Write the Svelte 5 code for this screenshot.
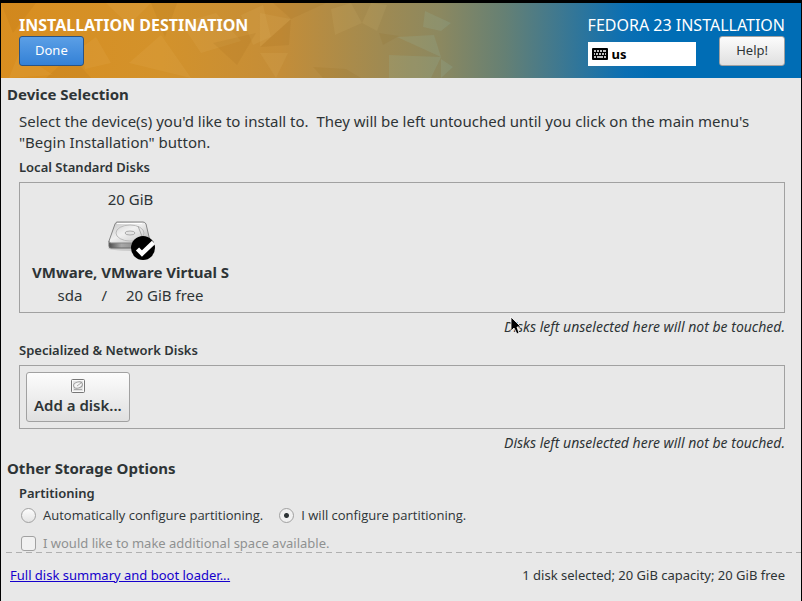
<script>
  let keyboard = 'us';
  let partitioning = 'custom';
  let reclaim = false;
  let selected = true;

  const disk = {
    size: '20 GiB',
    name: 'VMware, VMware Virtual S',
    device: 'sda',
    free: '20 GiB free'
  };

  const untouched = 'Disks left unselected here will not be touched.';

  function toggleDisk() {
    selected = !selected;
  }
</script>

<svelte:head>
  <title>Installation Destination</title>
</svelte:head>

<div class="window">
  <header>
    <svg class="backdrop" viewBox="0 0 800 75" preserveAspectRatio="none" aria-hidden="true">
      <defs>
        <linearGradient id="sky">
          <stop offset="0" stop-color="#d98e20" />
          <stop offset="0.2" stop-color="#d3922b" />
          <stop offset="0.35" stop-color="#c48d38" />
          <stop offset="0.44" stop-color="#a98b4b" />
          <stop offset="0.55" stop-color="#8b8860" />
          <stop offset="0.63" stop-color="#658074" />
          <stop offset="0.7" stop-color="#3d7891" />
          <stop offset="0.78" stop-color="#0b6fb3" />
          <stop offset="0.82" stop-color="#006db5" />
        </linearGradient>
      </defs>
      <rect width="800" height="75" fill="url(#sky)" />
      <g fill="#ffe0a0" fill-opacity="0.07">
        <path d="M18 50 52 72 8 75z" />
        <path d="M80 45 95 34 110 60 84 66z" />
        <path d="M105 0 150 0 128 22z" />
        <path d="M128 60 160 32 190 75z" />
        <path d="M180 20 215 10 240 38 200 50z" />
        <path d="M240 12 262 2 270 34 252 42z" />
        <path d="M259 10 290 16 259 44z" />
        <path d="M259 50 287 50 275 75z" />
        <path d="M330 6 350 0 361 20 334 32z" />
        <path d="M361 20 370 0 386 2 376 28z" />
      </g>
      <g fill="#a0d8d0" fill-opacity="0.12">
        <path d="M396 34 433 32 440 54z" />
        <path d="M388 52 440 54 430 75 388 75z" />
        <path d="M424 8 450 20 440 28 422 24z" />
        <path d="M440 56 452 64 440 75z" />
      </g>
      <g fill="#7a4a00" fill-opacity="0.08">
        <path d="M0 0 35 0 12 30z" />
        <path d="M45 75 70 52 90 75z" />
        <path d="M150 0 176 0 164 34z" />
        <path d="M212 40 255 30 236 62z" />
        <path d="M259 44 290 16 288 42z" />
        <path d="M272 0 325 0 290 16z" />
        <path d="M312 64 345 66 360 75 322 75z" />
        <path d="M378 30 398 33 382 42z" />
      </g>
    </svg>
    <div class="side">
      <h1>INSTALLATION DESTINATION</h1>
      <button class="done">Done</button>
    </div>
    <div class="side right">
      <span class="product">FEDORA 23 INSTALLATION</span>
      <div class="tools">
        <label class="keyboard">
          <svg width="16" height="12" viewBox="0 0 16 12" aria-hidden="true">
            <rect width="16" height="12" rx="1" />
            <path
              d="M2 3h2M5 3h2M8 3h2M11 3h3M2 6h1M4 6h2M7 6h2M10 6h2M13 6h1M2 9h2M5 9h6M12 9h2"
              stroke="#fff"
              stroke-width="1.6"
            />
          </svg>
          <input aria-label="Keyboard layout" bind:value={keyboard} readonly />
        </label>
        <button class="help">Help!</button>
      </div>
    </div>
  </header>

  <main>
    <h2>Device Selection</h2>
    <section>
      <p class="intro">
        Select the device(s) you'd like to install to.&nbsp; They will be left untouched until you click on the main menu's "Begin Installation" button.
      </p>

      <h3>Local Standard Disks</h3>
      <div class="frame local">
        <button class="disk" aria-pressed={selected} on:click={toggleDisk}>
          <span>{disk.size}</span>
          <svg class="drive" width="48" height="48" viewBox="0 0 48 48" aria-hidden="true">
            <defs>
              <linearGradient id="top" x2="1" y2="1">
                <stop offset="0" stop-color="#c2c2c2" />
                <stop offset="0.45" stop-color="#efefef" />
                <stop offset="1" stop-color="#b4b4b4" />
              </linearGradient>
              <linearGradient id="front">
                <stop offset="0" stop-color="#4c4c4c" />
                <stop offset="0.3" stop-color="#a9a9a9" />
                <stop offset="1" stop-color="#707070" />
              </linearGradient>
            </defs>
            <ellipse cx="23" cy="35" rx="22" ry="3" fill="#000" opacity="0.12" />
            <path d="M2 28v5q0 2 2 2h36q3 0 3-2v-5z" fill="url(#front)" stroke="#666" />
            <path d="M10 9h26q2 0 3 2l4 17q0 2-2 2H4q-2 0-2-2l6-17q1-2 2-2z" fill="url(#top)" stroke="#858585" />
            <path d="M10 10.500h25" stroke="#fff" />
            <ellipse cx="23" cy="20" rx="14" ry="8" fill="#fff" fill-opacity="0.15" stroke="#bbb" />
            <ellipse cx="23" cy="20" rx="5" ry="2" fill="#e4e4e4" stroke="#aaa" />
            <path d="M31 13l5 13" stroke="#aaa" fill="none" />
            {#if selected}
              <circle cx="36" cy="35" r="12" />
              <path d="M30.500 36l4.500 4.500 11.500-11" fill="none" stroke="#fff" stroke-width="4.500" />
            {/if}
          </svg>
          <strong>{disk.name}</strong>
          <span class="details">
            <span>{disk.device}</span>
            <span>/</span>
            <span>{disk.free}</span>
          </span>
        </button>
      </div>
      <p class="note">{untouched}</p>

      <h3>Specialized &amp; Network Disks</h3>
      <div class="frame">
        <button class="add">
          <svg width="16" height="16" viewBox="0 0 16 16" aria-hidden="true">
            <rect x="1.500" y="1.500" width="13" height="13" rx="1" fill="#e4e4e4" stroke="#777" />
            <rect x="2.500" y="2.500" width="11" height="11" fill="none" stroke="#fafafa" />
            <ellipse cx="8" cy="7" rx="4.500" ry="3" fill="#f4f4f4" stroke="#999" transform="rotate(-18 8 7)" />
            <path d="M4 11.500h8M7 8l4-3" stroke="#aaa" />
          </svg>
          Add a disk...
        </button>
      </div>
      <p class="note">{untouched}</p>
    </section>

    <h2>Other Storage Options</h2>
    <section>
      <h3 id="partitioning">Partitioning</h3>
      <div class="choices" role="radiogroup" aria-labelledby="partitioning">
        <label>
          <input type="radio" name="partitioning" value="auto" bind:group={partitioning} />
          Automatically configure partitioning.
        </label>
        <label>
          <input type="radio" name="partitioning" value="custom" bind:group={partitioning} />
          I will configure partitioning.
        </label>
      </div>
      <label class="reclaim">
        <input type="checkbox" bind:checked={reclaim} disabled={partitioning === 'custom'} />
        I would like to make additional space available.
      </label>
    </section>
  </main>

  <svg class="divider" width="100%" height="1" aria-hidden="true">
    <path d="M5 0.500h2000" stroke="#b0b0b0" stroke-dasharray="6 4" />
  </svg>
  <footer>
    <a href="#summary">Full disk summary and boot loader...</a>
    <span>1 disk selected; 20 GiB capacity; 20 GiB free</span>
  </footer>

  <svg class="pointer" width="13" height="19" viewBox="0 0 13 19" aria-hidden="true">
    <path d="M1 1v14l3-3 3 6 2-1-2-6h4z" stroke="#fff" stroke-width="0.800" />
  </svg>
</div>

<style>
  :global(body) {
    margin: 0;
    background: #e8e8e8;
  }

  .window {
    position: relative;
    display: flex;
    flex-direction: column;
    box-sizing: border-box;
    min-height: 100vh;
    border: solid #000;
    border-width: 3px 1px 0;
    background: #e8e8e8;
    color: #2e3436;
    font: 13px/18px "Noto Sans", "Open Sans", sans-serif;
  }

  h1, h2, h3, p {
    margin: 0;
  }

  button, input {
    font: inherit;
    color: inherit;
  }

  header {
    position: relative;
    display: flex;
    justify-content: space-between;
    padding: 12px 16px 12px 18px;
    color: #fff;
  }

  .backdrop {
    position: absolute;
    inset: 0;
    width: 100%;
    height: 100%;
  }

  .side {
    position: relative;
    display: flex;
    flex-direction: column;
    align-items: flex-start;
  }

  .right {
    align-items: stretch;
  }

  h1, .product {
    font-size: 16px;
    line-height: 21px;
  }

  h1 {
    font-weight: 700;
  }

  .tools {
    display: flex;
    justify-content: space-between;
    align-items: flex-end;
  }

  .done, .help, .add {
    border: 1px solid #a1a1a1;
    border-radius: 3px;
    background: linear-gradient(#fcfcfc, #e0e0e0);
    color: #2e3436;
  }

  .done, .help {
    height: 30px;
    padding: 0 16px 2px;
  }

  .done {
    padding: 0 15px 2px;
    border-color: #2a5383;
    background: linear-gradient(#5b9fe6, #3481d6);
    color: #fff;
  }

  .keyboard {
    display: flex;
    align-items: center;
    gap: 4px;
    box-sizing: border-box;
    width: 108px;
    height: 24px;
    padding: 0 4px;
    background: #fff;
    color: #000;
  }

  .keyboard svg {
    flex: none;
  }

  .keyboard input {
    width: 100%;
    min-width: 0;
    padding: 0;
    border: none;
    background: none;
    font-weight: 700;
  }

  main {
    padding: 6px 16px 0 6px;
  }

  h2 {
    font-size: 15px;
    font-weight: 700;
    line-height: 21px;
  }

  section {
    padding-left: 12px;
  }

  .intro {
    margin: 6px 0 5px;
    font-size: 15px;
    line-height: 21px;
  }

  h3 {
    font-size: 13px;
    font-weight: 600;
    line-height: 18px;
  }

  .frame {
    display: flex;
    margin-top: 6px;
    padding: 6px;
    border: 1px solid #a1a1a1;
  }

  .local {
    padding: 5px 6px;
  }

  .disk {
    display: flex;
    flex-direction: column;
    align-items: center;
    padding: 0 6px;
    border: none;
    background: none;
    font-size: 15px;
    line-height: 23px;
  }

  .disk strong {
    font-weight: 700;
  }

  .drive {
    display: block;
    margin-top: 2px;
  }

  .details {
    display: flex;
    gap: 19px;
  }

  .note {
    margin: 5px 0;
    font-size: 14px;
    font-style: italic;
    text-align: right;
  }

  .add {
    display: flex;
    flex-direction: column;
    align-items: center;
    height: 50px;
    padding: 5px 7px;
    font-size: 15px;
    font-weight: 600;
    line-height: 22px;
  }

  section + h2 {
    margin: 6px 0 5px;
  }

  .choices {
    display: flex;
    gap: 14px;
    margin: 4px 0 10px;
    font-family: "Open Sans", "Noto Sans", sans-serif;
  }

  label {
    display: flex;
    align-items: center;
    gap: 7px;
  }

  input[type='radio'], input[type='checkbox'] {
    appearance: none;
    flex: none;
    box-sizing: border-box;
    width: 15px;
    height: 15px;
    margin: 0 0 0 2px;
    border: 1px solid #a1a1a1;
    border-radius: 50%;
    background: linear-gradient(#fcfcfc, #e4e4e4);
  }

  input[type='radio']:checked {
    background: radial-gradient(circle, #2e3436 2px, #f0f0f0 3px);
  }

  input[type='checkbox'] {
    border-radius: 3px;
    background: #f1f1f1;
  }

  input[type='checkbox']:checked {
    background: #2e3436;
  }

  .reclaim {
    color: #8f9191;
  }

  .divider {
    display: block;
  }

  footer {
    display: flex;
    justify-content: space-between;
    padding: 13px 16px 16px 9px;
  }

  a {
    color: #1500cc;
  }

  .pointer {
    position: absolute;
    left: 509px;
    top: 313px;
  }
</style>
